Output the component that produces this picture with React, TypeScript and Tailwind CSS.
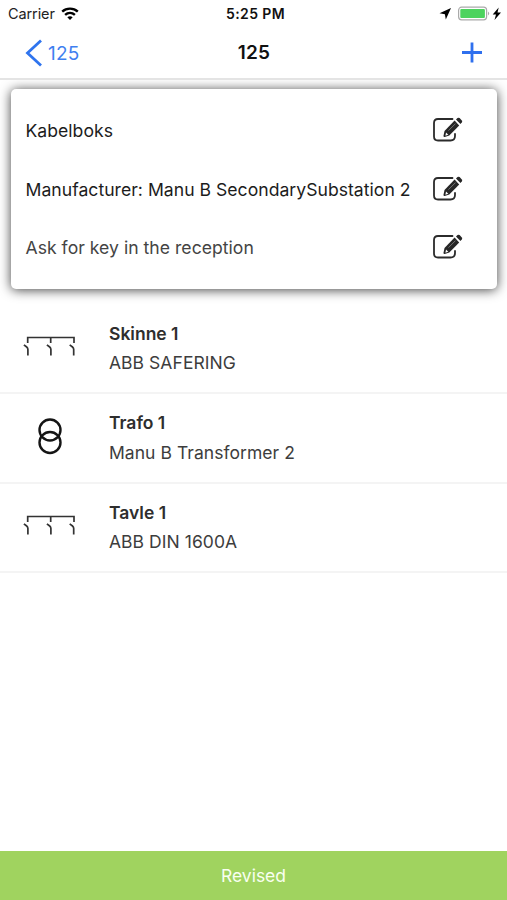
import React from "react";

function Wifi() {
  return (
    <svg width="18" height="14" viewBox="0 0 18 14" fill="none" stroke="#000" strokeWidth="2.4">
      <path d="M1.200 4.600C5.600.6 12.400.6 16.800 4.600" />
      <path d="M4.100 7.900c2.900-2.700 6.900-2.700 9.800 0" />
      <path d="M9 13 6.300 10.300q2.700-2.200 5.400 0z" fill="#000" stroke="none" />
    </svg>
  );
}

function EditIcon() {
  return (
    <svg width="32" height="26" viewBox="0 0 32 26" fill="none">
      <path
        d="M20.500 2H6Q2 2 2 6v13.500Q2 23.500 6 23.500H18.500q4.500 0 4.500-4.500v-2"
        stroke="#2b2b2b"
        strokeWidth="1.800"
        strokeLinecap="round"
      />
      <path d="m22.600 3.600 4.600 4.800L17.300 18.600l-4.600 1.300q-1.400.2-1.200-1.200l1-4.700z" fill="#262626" />
      <path d="m24 2.400 1.500-1.300q1.100-.9 2.100 0l2.200 2.300q.9 1 0 2l-1.400 1.500z" fill="#262626" />
      <path d="m14 15.400 2.300 2.300-2.900 1z" fill="#fff" />
      <path d="m16.500 13.600 7-7" stroke="#888" strokeWidth=".8" />
    </svg>
  );
}

function SwitchgearIcon() {
  return (
    <svg width="54" height="22" viewBox="0 0 54 22" fill="none" stroke="#333" strokeWidth="1.700">
      <path d="M4.700 8V2.500H51V8M27.700 2.500V8" />
      <path d="M.9 9.800 3.700 12q1.200 1 1.200 2.600V20.500M23.900 9.800 26.700 12q1.200 1 1.200 2.600V20.500M46.700 9.800 49.500 12q1.200 1 1.200 2.600V20.500" />
    </svg>
  );
}

function TransformerIcon() {
  return (
    <svg width="54" height="38" viewBox="0 0 54 38" fill="none" stroke="#151515" strokeWidth="2.400">
      <circle cx="27" cy="13" r="10.500" />
      <circle cx="27" cy="25.500" r="10.500" />
    </svg>
  );
}

const details = [
  { text: "Kabelboks", style: "text-[#1c1c1c]" },
  { text: "Manufacturer: Manu B SecondarySubstation 2", style: "text-[#1c1c1c]" },
  { text: "Ask for key in the reception", style: "text-[#444]" },
];

const components = [
  { name: "Skinne 1", type: "ABB SAFERING", icon: <SwitchgearIcon /> },
  { name: "Trafo 1", type: "Manu B Transformer 2", icon: <TransformerIcon /> },
  { name: "Tavle 1", type: "ABB DIN 1600A", icon: <SwitchgearIcon /> },
];

export default function App() {
  return (
    <div className="flex h-[900px] w-[507px] flex-col overflow-hidden bg-white font-['Inter',sans-serif]">
      <div className="grid h-[27px] shrink-0 grid-cols-3 items-center pl-2 pr-1">
        <div className="flex items-center gap-[6px] text-[14.500px] tracking-[-0.1px] text-[#222]">
          <span>Carrier</span>
          <Wifi />
        </div>
        <span className="pb-px text-center text-[14px] font-semibold tracking-[0.4px] text-[#111]">5:25 PM</span>
        <div className="flex items-center justify-end">
          <svg width="66" height="18" viewBox="0 0 66 18">
            <path d="m14 3-5.200 11.500-.9-5.200-5.400-1z" fill="#000" />
            <rect x="21.600" y="2.200" width="28" height="12.600" rx="3" fill="#fff" stroke="#aaa" strokeWidth="1.200" />
            <rect x="23.300" y="4" width="24.600" height="9" rx="1" fill="#4cd35e" />
            <path d="M51 6.500q2.400 2 0 4z" fill="#aaa" />
            <path d="m61.700 2.500-6 7H59L57.500 15l6.500-7.500h-3.500z" fill="#000" />
          </svg>
        </div>
      </div>

      <header className="grid h-[53px] shrink-0 grid-cols-3 items-center border-b-2 border-[#e4e4e4] pl-[25px] pr-[24px]">
        <div className="flex items-center gap-[5px] text-[19px] text-[#3f7ff0]">
          <svg width="18" height="28" viewBox="0 0 18 28" fill="none" stroke="#2f74ee" strokeWidth="2.800">
            <path d="M16 1.500 2.500 14 16 26.500" />
          </svg>
          <span className="pt-[3px] tracking-[0.2px]">125</span>
        </div>
        <h1 className="pt-[2px] text-center text-[19px] font-semibold tracking-[0.2px] text-[#111]">125</h1>
        <svg className="justify-self-end" width="22" height="22" viewBox="0 0 22 22" stroke="#2f70ee" strokeWidth="2.800">
          <path d="M1 10.500h20M11 .5v20" />
        </svg>
      </header>

      <main className="flex min-h-0 flex-1 flex-col overflow-hidden">
        <section className="mr-[10px] ml-[11px] mt-[9px] flex h-[200px] shrink-0 flex-col rounded-[5px] pt-[12px] pl-[14.500px] pr-[33px] shadow-[0_1px_12px_rgba(0,0,0,0.75)]">
          {details.map((item) => (
            <div key={item.text} className="flex h-[58.500px] items-center justify-between">
              <span className={`pt-[2px] text-[17.600px] tracking-[0.02px] whitespace-nowrap ${item.style}`}>{item.text}</span>
              <EditIcon />
            </div>
          ))}
        </section>

        <ul className="mt-[16px]">
          {components.map((item) => (
            <li key={item.name} className="flex h-[89.400px] items-center gap-[32px] border-b-2 border-[#f4f4f4] pl-[23px]">
              <div className="pb-[5px]">{item.icon}</div>
              <div className="pb-px text-[17.500px] leading-[29.300px] text-[#3d3d3d]">
                <h2 className="font-semibold text-[#2e2e2e]">{item.name}</h2>
                <p className="tracking-[0.05px]">{item.type}</p>
              </div>
            </li>
          ))}
        </ul>
      </main>

      <button className="h-[49px] shrink-0 bg-[#a0d35f] pt-[2px] text-[17.500px] text-[#f8fff0]">Revised</button>
    </div>
  );
}
